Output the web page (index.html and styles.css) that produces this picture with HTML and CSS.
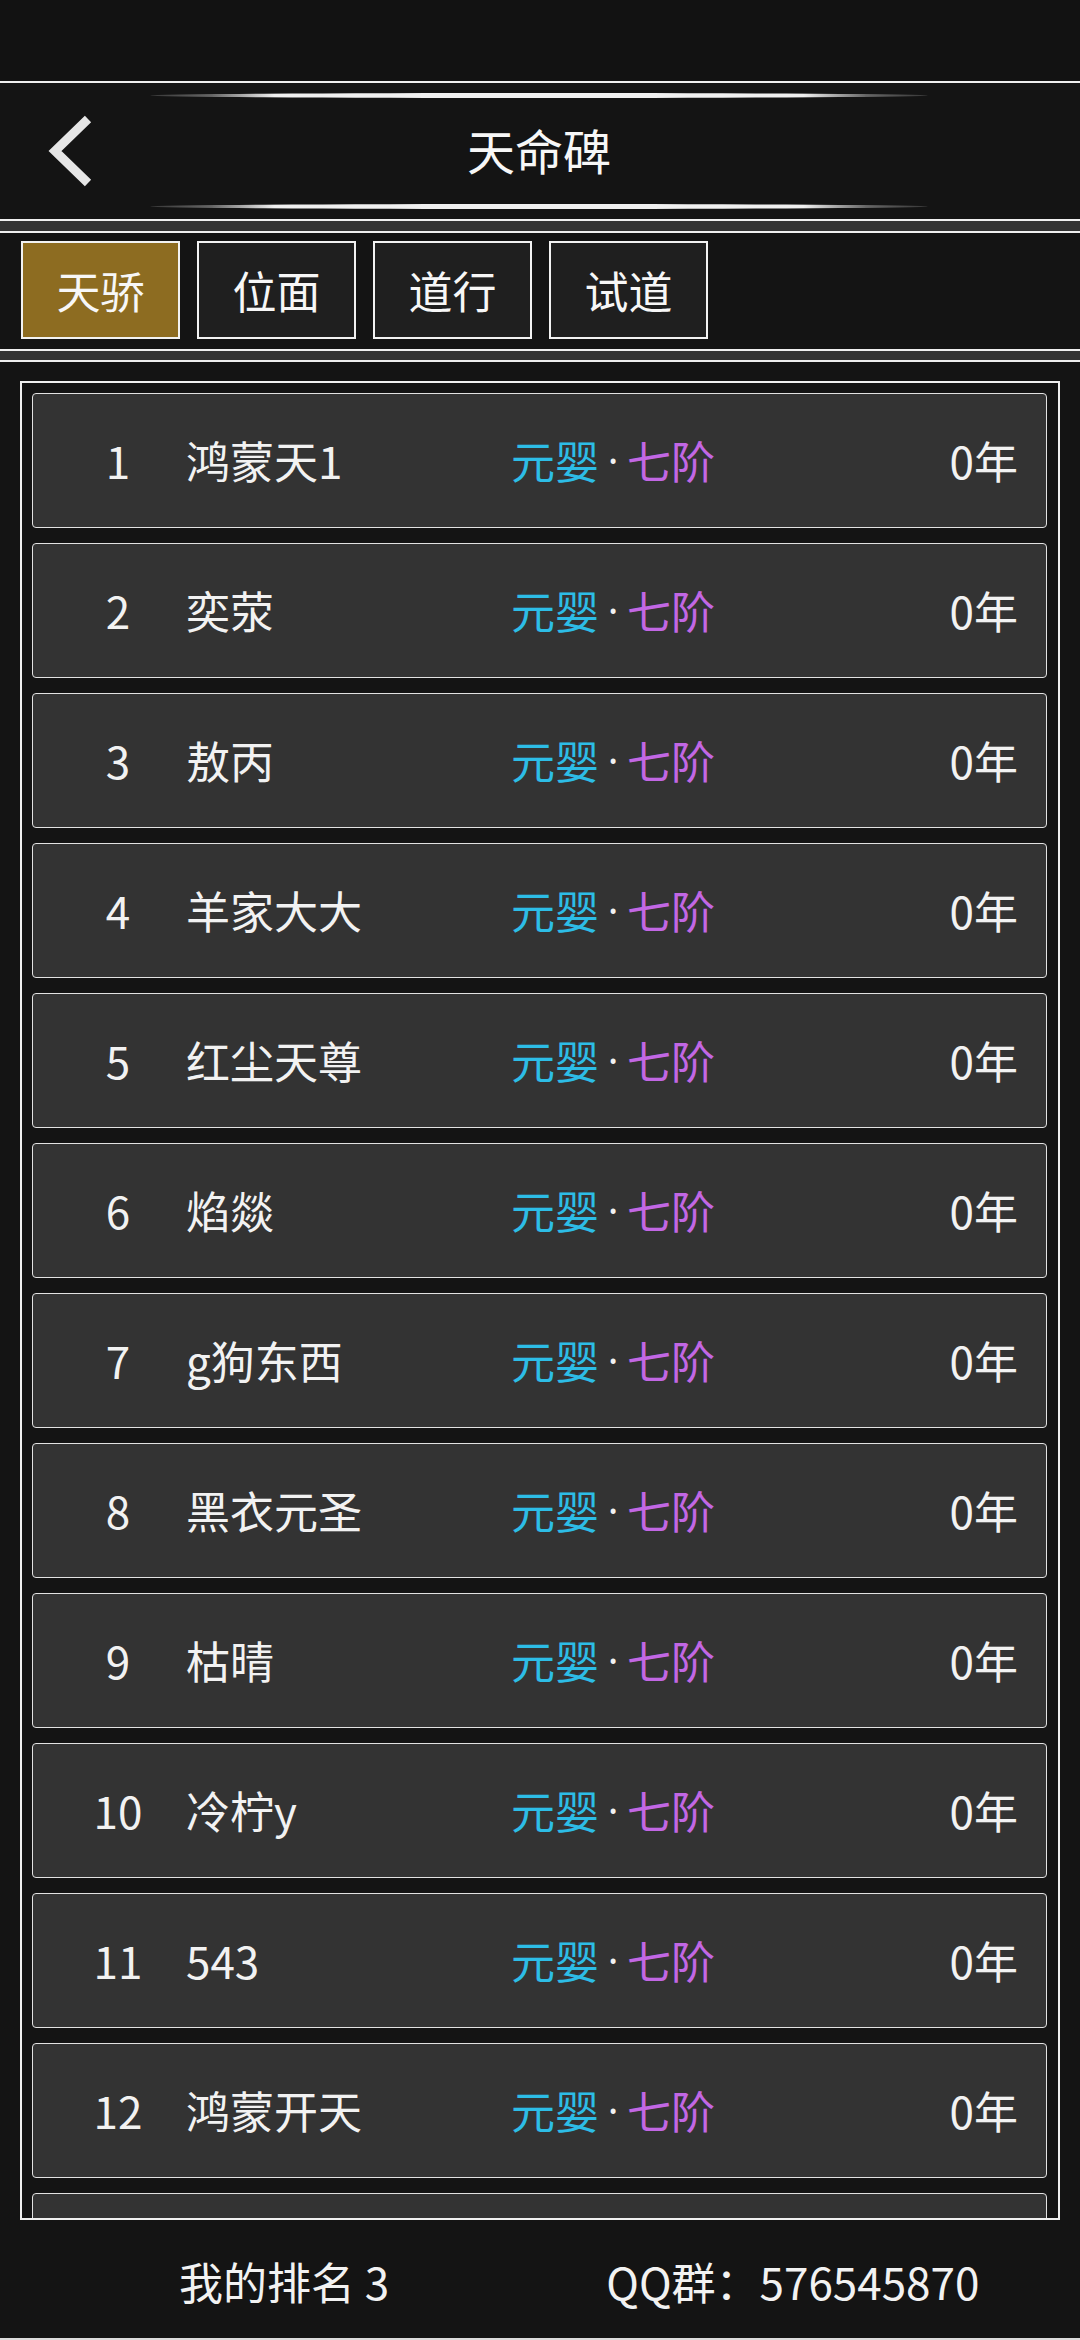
FILE: index.html
```html
<!DOCTYPE html>
<html lang="zh-CN">
<head>
<meta charset="utf-8">
<title>天命碑</title>
<link rel="stylesheet" href="styles.css">
</head>
<body>
<div class="app">
  <div class="status"></div>
  <div class="hline"></div>
  <header class="header">
    <div class="back">
      <svg width="150" height="136" viewBox="0 0 150 136">
        <polyline points="88,36 55,68 88,100" fill="none" stroke="#e6e6e6" stroke-width="9" stroke-linejoin="miter" stroke-linecap="butt"/>
      </svg>
    </div>
    <div class="title-col">
      <div class="glow"></div>
      <div class="title">天命碑</div>
      <div class="glow"></div>
    </div>
    <div class="spacer"></div>
  </header>
  <div class="hline"></div>
  <div class="band"></div>
  <div class="hline"></div>
  <nav class="tabs">
    <div class="tab active">天骄</div>
    <div class="tab">位面</div>
    <div class="tab">道行</div>
    <div class="tab">试道</div>
  </nav>
  <div class="hline"></div>
  <div class="band thin"></div>
  <div class="hline"></div>
  <main class="main">
    <div class="frame">
      <div class="row"><span class="rank">1</span><span class="name">鸿蒙天1</span><span class="realm"><span class="r1">元婴</span><span class="dot">·</span><span class="r2">七阶</span></span><span class="year">0年</span></div>
      <div class="row"><span class="rank">2</span><span class="name">奕荥</span><span class="realm"><span class="r1">元婴</span><span class="dot">·</span><span class="r2">七阶</span></span><span class="year">0年</span></div>
      <div class="row"><span class="rank">3</span><span class="name">敖丙</span><span class="realm"><span class="r1">元婴</span><span class="dot">·</span><span class="r2">七阶</span></span><span class="year">0年</span></div>
      <div class="row"><span class="rank">4</span><span class="name">羊家大大</span><span class="realm"><span class="r1">元婴</span><span class="dot">·</span><span class="r2">七阶</span></span><span class="year">0年</span></div>
      <div class="row"><span class="rank">5</span><span class="name">红尘天尊</span><span class="realm"><span class="r1">元婴</span><span class="dot">·</span><span class="r2">七阶</span></span><span class="year">0年</span></div>
      <div class="row"><span class="rank">6</span><span class="name">焰燚</span><span class="realm"><span class="r1">元婴</span><span class="dot">·</span><span class="r2">七阶</span></span><span class="year">0年</span></div>
      <div class="row"><span class="rank">7</span><span class="name">g狗东西</span><span class="realm"><span class="r1">元婴</span><span class="dot">·</span><span class="r2">七阶</span></span><span class="year">0年</span></div>
      <div class="row"><span class="rank">8</span><span class="name">黑衣元圣</span><span class="realm"><span class="r1">元婴</span><span class="dot">·</span><span class="r2">七阶</span></span><span class="year">0年</span></div>
      <div class="row"><span class="rank">9</span><span class="name">枯晴</span><span class="realm"><span class="r1">元婴</span><span class="dot">·</span><span class="r2">七阶</span></span><span class="year">0年</span></div>
      <div class="row"><span class="rank">10</span><span class="name">冷柠y</span><span class="realm"><span class="r1">元婴</span><span class="dot">·</span><span class="r2">七阶</span></span><span class="year">0年</span></div>
      <div class="row"><span class="rank">11</span><span class="name">543</span><span class="realm"><span class="r1">元婴</span><span class="dot">·</span><span class="r2">七阶</span></span><span class="year">0年</span></div>
      <div class="row"><span class="rank">12</span><span class="name">鸿蒙开天</span><span class="realm"><span class="r1">元婴</span><span class="dot">·</span><span class="r2">七阶</span></span><span class="year">0年</span></div>
      <div class="row"></div>
    </div>
  </main>
  <footer class="footer">
    <span class="my-rank">我的排名 3</span>
    <span class="qq">QQ群：576545870</span>
  </footer>
  <div class="bottom-line"></div>
</div>
</body>
</html>
```

FILE: styles.css
```css
* {
  box-sizing: border-box;
}

html, body {
  margin: 0;
  padding: 0;
  background: #111111;
}

body {
  font-family: "Noto Sans CJK SC", "Noto Sans", sans-serif;
  color: #f2f2f2;
}

.app {
  width: 1080px;
  height: 2340px;
  display: flex;
  flex-direction: column;
  overflow: hidden;
}

.status {
  height: 81px;
  background: #121212;
}

.hline {
  height: 2px;
  background: #efefef;
}

.header {
  height: 136px;
  background: #141414;
  display: flex;
}

.back {
  width: 150px;
  height: 136px;
}

.back svg {
  display: block;
}

.title-col {
  width: 778px;
  display: flex;
  flex-direction: column;
  align-items: stretch;
  padding: 10px 0 10px;
}

.glow {
  height: 5px;
  border-radius: 50%;
  background: linear-gradient(to right,
    rgba(255,255,255,0.15) 0%,
    rgba(255,255,255,0.35) 8%,
    #f0f0f0 16%,
    #f0f0f0 84%,
    rgba(255,255,255,0.35) 92%,
    rgba(255,255,255,0.15) 100%);
}

.title {
  flex: 1;
  display: flex;
  align-items: center;
  justify-content: center;
  font-size: 48px;
  line-height: 1;
  color: #f7f7f7;
  padding-bottom: 4px;
}

.spacer {
  flex: 1;
}

.band {
  height: 10px;
  background: #333333;
}

.band.thin {
  height: 9px;
}

.tabs {
  height: 116px;
  background: #141414;
  display: flex;
  gap: 17px;
  padding: 8px 19px 10px 21px;
}

.tab {
  width: 159px;
  height: 98px;
  border: 2px solid #f2f2f2;
  background: #1f1f1f;
  display: flex;
  align-items: center;
  justify-content: center;
  font-size: 44px;
  line-height: 1;
  color: #f7f7f7;
}

.tab.active {
  background: #8d6c21;
}

.main {
  height: 1858px;
  background: #141414;
  padding: 19px 20px 0 20px;
}

.frame {
  height: 1839px;
  border: 2px solid #f0f0f0;
  padding: 10px 11px 0 10px;
  overflow: hidden;
}

.row {
  height: 135px;
  flex-shrink: 0;
  margin-bottom: 15px;
  background: #333333;
  border: 1px solid #e2e2e2;
  border-radius: 4px;
  display: flex;
  align-items: center;
  padding: 0 28px 2px 35px;
  font-size: 44px;
  line-height: 1;
  color: #f2f2f2;
}

.rank {
  width: 100px;
  text-align: center;
}

.name {
  width: 325px;
  margin-left: 18px;
  white-space: nowrap;
}

.realm {
  display: flex;
  align-items: center;
}

.r1 {
  color: #2dbde6;
}

.r2 {
  color: #c267e4;
}

.dot {
  width: 28px;
  text-align: center;
  font-family: "Noto Sans", "DejaVu Sans", sans-serif;
  font-size: 40px;
  color: #f2f2f2;
}

.year {
  margin-left: auto;
}

.footer {
  height: 118px;
  background: #141414;
  display: flex;
  align-items: center;
  padding: 4px 0 0 179px;
  gap: 217px;
  font-size: 44px;
  line-height: 1;
  color: #f2f2f2;
}

.bottom-line {
  height: 2px;
  background: #dcdcdc;
}
```
